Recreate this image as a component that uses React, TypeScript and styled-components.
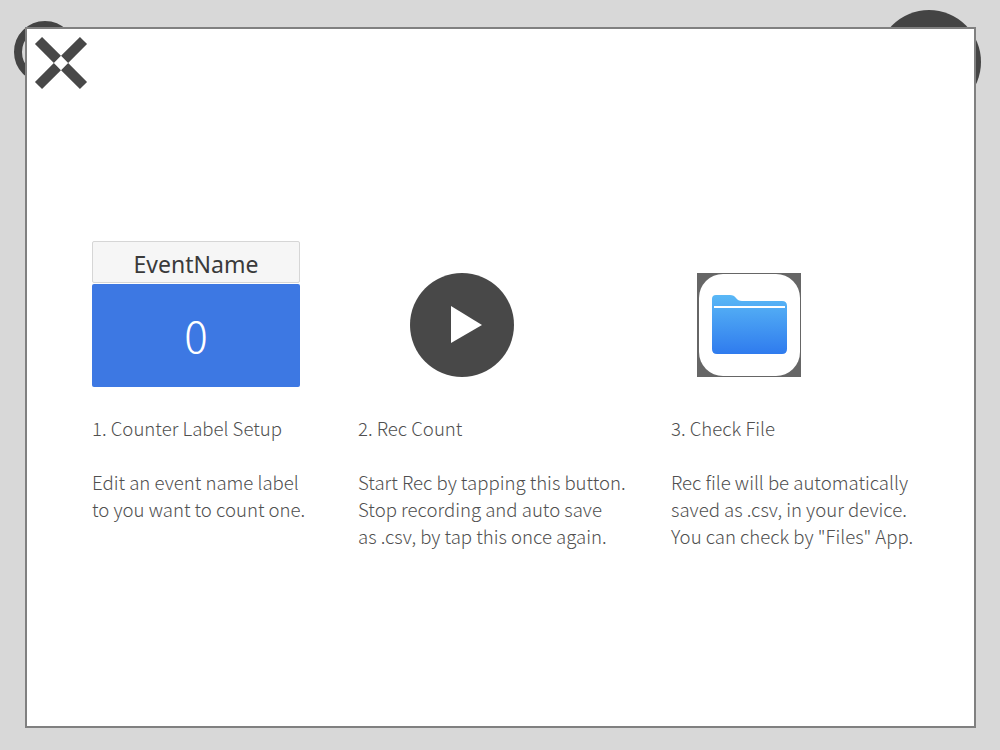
import * as React from "react";
import styled, { createGlobalStyle } from "styled-components";

const GlobalStyle = createGlobalStyle`
  html, body {
    margin: 0;
    padding: 0;
    background: #d8d8d8;
  }
`;

const Screen = styled.div`
  position: relative;
  width: 1000px;
  height: 750px;
  overflow: hidden;
  background: #d8d8d8;
  font-family: "Noto Sans CJK JP", "Noto Sans", sans-serif;
`;

const BackRing = styled.div`
  position: absolute;
  left: 14px;
  top: 21px;
  width: 62px;
  height: 62px;
  box-sizing: border-box;
  border: 8px solid #444444;
  border-radius: 50%;
`;

const BackDisc = styled.div`
  position: absolute;
  left: 877px;
  top: 10px;
  width: 104px;
  height: 104px;
  border-radius: 50%;
  background: #444444;
`;

const Modal = styled.div`
  position: absolute;
  left: 25px;
  top: 27px;
  width: 951px;
  height: 701px;
  box-sizing: border-box;
  border: 2px solid #808080;
  background: #ffffff;
  padding: 212px 0 0 65px;
`;

const CloseButton = styled.button`
  position: absolute;
  left: 7px;
  top: 7px;
  width: 54px;
  height: 54px;
  padding: 0;
  border: 0;
  background: none;
  display: block;
`;

const Steps = styled.div`
  display: grid;
  grid-template-columns: 266px 313px 1fr;
`;

const Step = styled.div`
  display: flex;
  flex-direction: column;
`;

const Visual = styled.div<{ $width: number; $top: number }>`
  width: ${(p) => p.$width}px;
  height: 146px;
  box-sizing: border-box;
  padding-top: ${(p) => p.$top}px;
  display: flex;
  flex-direction: column;
  align-items: center;
  margin-bottom: 27px;
`;

const Counter = styled.div`
  width: 208px;
  height: 146px;
  display: flex;
  flex-direction: column;
`;

const CounterLabel = styled.div`
  height: 42px;
  box-sizing: border-box;
  border: 1px solid #d6d6d6;
  border-radius: 2px;
  background: #f6f6f6;
  color: #3a3a3a;
  font-family: "Noto Sans", sans-serif;
  font-size: 23px;
  line-height: 44px;
  text-align: center;
`;

const CounterValue = styled.div`
  height: 103px;
  margin-top: 1px;
  border-radius: 2px;
  background: #3d78e3;
  color: #ffffff;
  font-weight: 300;
  font-size: 44px;
  line-height: 100px;
  text-align: center;
`;

const Description = styled.div`
  color: #505050;
  font-size: 18.6px;
  font-weight: 300;
  line-height: 27px;
  white-space: pre-line;
`;

const Title = styled(Description)`
  margin-bottom: 27px;
`;

function CloseIcon() {
  return (
    <svg width="54" height="54" viewBox="0 0 54 54">
      <path
        d="M23.4 23.4 L4.5 4.5 M30.6 23.4 L49.5 4.5 M23.4 30.6 L4.5 49.5 M30.6 30.6 L49.5 49.5"
        stroke="#484848"
        strokeWidth="10"
        fill="none"
      />
    </svg>
  );
}

function PlayIcon() {
  return (
    <svg width="104" height="104" viewBox="0 0 104 104">
      <circle cx="52" cy="52" r="52" fill="#484848" />
      <path d="M41 33 L72 52 L41 70 Z" fill="#ffffff" />
    </svg>
  );
}

function FilesIcon() {
  return (
    <svg width="104" height="104" viewBox="0 0 104 104">
      <defs>
        <linearGradient id="folderFill" x1="0" y1="0" x2="0" y2="1">
          <stop offset="0" stopColor="#5ab8f6" />
          <stop offset="1" stopColor="#2f7bee" />
        </linearGradient>
      </defs>
      <rect width="104" height="104" fill="#666666" />
      <rect x="2" y="1" width="101" height="102" rx="24" fill="#ffffff" />
      <path
        d="M19 22 H33 Q37 22 39 25 Q41 28 45 28 H85 Q90 28 90 33 V76 Q90 81 85 81 H20 Q15 81 15 76 V26 Q15 22 19 22 Z"
        fill="url(#folderFill)"
      />
      <rect x="17" y="33" width="71" height="2" fill="#ffffff" />
    </svg>
  );
}

export default function App() {
  return (
    <Screen>
      <GlobalStyle />
      <BackRing />
      <BackDisc />
      <Modal>
        <CloseButton aria-label="Close">
          <CloseIcon />
        </CloseButton>
        <Steps>
          <Step>
            <Visual $width={208} $top={0}>
              <Counter>
                <CounterLabel>EventName</CounterLabel>
                <CounterValue>0</CounterValue>
              </Counter>
            </Visual>
            <Title>1. Counter Label Setup</Title>
            <Description>
              {"Edit an event name label\nto you want to count one."}
            </Description>
          </Step>
          <Step>
            <Visual $width={208} $top={32}>
              <PlayIcon />
            </Visual>
            <Title>2. Rec Count</Title>
            <Description>
              {"Start Rec by tapping this button.\nStop recording and auto save\nas .csv, by tap this once again."}
            </Description>
          </Step>
          <Step>
            <Visual $width={156} $top={32}>
              <FilesIcon />
            </Visual>
            <Title>3. Check File</Title>
            <Description>
              {"Rec file will be automatically\nsaved as .csv, in your device.\nYou can check by \"Files\" App."}
            </Description>
          </Step>
        </Steps>
      </Modal>
    </Screen>
  );
}
